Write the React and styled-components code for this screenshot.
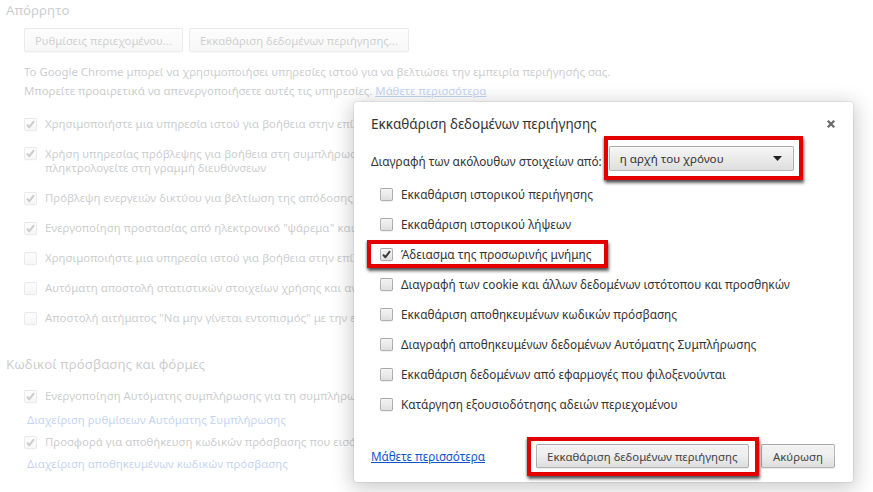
import React from "react";
import styled, { createGlobalStyle } from "styled-components";

const GlobalStyle = createGlobalStyle`
  html, body {
    margin: 0;
    padding: 0;
    background: #ffffff;
  }
  body {
    font-family: "Noto Sans", "Open Sans", sans-serif;
    font-size: 11.4px;
    color: #303942;
  }
`;

const Screen = styled.div`
  position: relative;
  width: 873px;
  height: 492px;
  overflow: hidden;
  background: #fff;
`;

/* ---------- settings page behind the dialog ---------- */

const Page = styled.div`
  padding: 0 0 0 6px;
`;

const SectionTitle = styled.h3`
  margin: ${(p) => p.top || 0}px 0 0 0;
  font-size: 13.3px;
  font-weight: normal;
  line-height: 20px;
  color: #303942;
  white-space: nowrap;
`;

const SectionBody = styled.div`
  padding-left: 18px;
  white-space: nowrap;
`;

const ButtonRow = styled.div`
  display: flex;
  gap: 6px;
  margin-top: 8px;
`;

const Button = styled.button`
  height: 24px;
  padding: 0 ${(p) => p.pad || 10}px;
  border: 1px solid rgba(0, 0, 0, 0.25);
  border-radius: 2px;
  background: linear-gradient(#f0f0f0, #f0f0f0 38%, #dedede);
  box-shadow: 0 1px 0 rgba(0, 0, 0, 0.08), inset 0 1px 2px rgba(255, 255, 255, 0.75);
  font-family: "Noto Sans", "Open Sans", sans-serif;
  font-size: ${(p) => p.size || 11.3}px;
  color: #444;
  white-space: nowrap;
  cursor: pointer;
`;

const Paragraph = styled.div`
  line-height: 19px;
  margin-top: ${(p) => p.top || 0}px;
`;

const Link = styled.a`
  color: #15c;
  text-decoration: ${(p) => (p.plain ? "none" : "underline")};
  cursor: pointer;
`;

/* rows run on under the dialog; clip them at its left edge */
const CheckList = styled.div`
  display: flex;
  flex-direction: column;
  width: 330px;
  overflow: hidden;
  margin-top: ${(p) => p.top || 0}px;
`;

const CheckRow = styled.label`
  display: flex;
  gap: 8px;
  padding: ${(p) => (p.multi ? "8px 0 8px" : "0")};
  min-height: ${(p) => (p.multi ? 0 : p.h || 30)}px;
  align-items: ${(p) => (p.multi ? "flex-start" : "center")};
  line-height: 14px;
`;

const SubLink = styled.div`
  padding-left: 3px;
  height: 24px;
  line-height: 24px;
`;

const BoxWrap = styled.span`
  flex: none;
  width: 13px;
  height: 13px;
  border: 1px solid rgba(0, 0, 0, 0.25);
  border-radius: 2px;
  box-sizing: border-box;
  background: linear-gradient(#ededed, #ededed 38%, #dedede);
  box-shadow: inset 0 1px 2px rgba(255, 255, 255, 0.75), 0 1px 0 rgba(0, 0, 0, 0.06);
  display: flex;
  align-items: center;
  justify-content: center;
`;

const Checkbox = ({ checked }) => (
  <BoxWrap>
    {checked && (
      <svg width="11" height="11" viewBox="0 0 11 11">
        <path d="M2 5.6 L4.4 8.2 L9 2.2" fill="none" stroke="#3b3b3b" strokeWidth="2" strokeLinejoin="round" />
      </svg>
    )}
  </BoxWrap>
);

/* ---------- modal overlay and dialog ---------- */

const Veil = styled.div`
  position: absolute;
  inset: 0;
  background: rgba(255, 255, 255, 0.74);
`;

const Dialog = styled.div`
  position: absolute;
  left: 354px;
  top: 102px;
  width: 499px;
  height: 380px;
  box-sizing: border-box;
  padding: 0 18px 0 17px;
  background: #fff;
  border-radius: 3px;
  box-shadow: 0 4px 20px 3px rgba(0, 0, 0, 0.2), 0 0 0 1px rgba(0, 0, 0, 0.06);
  display: flex;
  flex-direction: column;
  color: #333;
  font-size: 11.8px;
  white-space: nowrap;
`;

const DialogHeader = styled.div`
  height: 44px;
  display: flex;
  align-items: center;
  justify-content: space-between;
`;

const DialogTitle = styled.h2`
  margin: 0;
  font-size: 13.5px;
  font-weight: normal;
  color: #333;
`;

const CloseButton = styled.span`
  display: flex;
  margin-right: -1px;
  cursor: pointer;
`;

const SelectRow = styled.div`
  height: 30px;
  display: flex;
  align-items: center;
  gap: 7px;
`;

const Highlight = styled.div`
  display: inline-flex;
  align-self: flex-start;
  border: 4px solid #e30000;
  padding: ${(p) => p.pad};
  margin: ${(p) => p.mar};
  box-shadow: 1px 3px 3px rgba(0, 0, 0, 0.6), -1px 1px 2px rgba(0, 0, 0, 0.25);
  position: relative;
  z-index: 1;
  background: #fff;
`;

const Select = styled.div`
  width: 185px;
  height: 25px;
  box-sizing: border-box;
  border: 1px solid rgba(0, 0, 0, 0.25);
  border-radius: 2px;
  background: linear-gradient(#f5f5f5, #ededed 40%, #dedede);
  box-shadow: inset 0 1px 2px rgba(255, 255, 255, 0.75);
  display: flex;
  align-items: center;
  justify-content: space-between;
  padding: 0 11px 0 10px;
  font-size: 11.6px;
  color: #333;
`;

const DialogList = styled.div`
  display: flex;
  flex-direction: column;
  margin-top: 3px;
  padding-left: 9px;
`;

const DialogRow = styled.label`
  display: flex;
  align-items: center;
  gap: 8px;
  height: ${(p) => p.h || 30}px;
`;

const Footer = styled.div`
  margin-top: auto;
  padding-bottom: 14px;
  display: flex;
  align-items: center;
  justify-content: space-between;
`;

const FooterButtons = styled.div`
  display: flex;
  align-items: center;
  gap: 12px;
`;

const DialogLink = styled.a`
  color: #15c;
  text-decoration: underline;
  font-size: 11.7px;
  cursor: pointer;
`;

const items = [
  { text: "Εκκαθάριση ιστορικού περιήγησης", checked: false },
  { text: "Εκκαθάριση ιστορικού λήψεων", checked: false },
  { text: "Άδειασμα της προσωρινής μνήμης", checked: true, marked: true },
  { text: "Διαγραφή των cookie και άλλων δεδομένων ιστότοπου και προσθηκών", checked: false },
  { text: "Εκκαθάριση αποθηκευμένων κωδικών πρόσβασης", checked: false },
  { text: "Διαγραφή αποθηκευμένων δεδομένων Αυτόματης Συμπλήρωσης", checked: false },
  { text: "Εκκαθάριση δεδομένων από εφαρμογές που φιλοξενούνται", checked: false },
  { text: "Κατάργηση εξουσιοδότησης αδειών περιεχομένου", checked: false },
];

const App = () => {
  return (
    <Screen>
      <GlobalStyle />
      <Page>
        <SectionTitle>Απόρρητο</SectionTitle>
        <SectionBody>
          <ButtonRow>
            <Button>Ρυθμίσεις περιεχομένου...</Button>
            <Button>Εκκαθάριση δεδομένων περιήγησης...</Button>
          </ButtonRow>
          <Paragraph top={10}>
            Το Google Chrome μπορεί να χρησιμοποιήσει υπηρεσίες ιστού για να βελτιώσει την εμπειρία περιήγησής σας.
          </Paragraph>
          <Paragraph>
            Μπορείτε προαιρετικά να απενεργοποιήσετε αυτές τις υπηρεσίες. <Link>Μάθετε περισσότερα</Link>
          </Paragraph>
          <CheckList top={9}>
            <CheckRow>
              <Checkbox checked />
              <span>Χρησιμοποιήστε μια υπηρεσία ιστού για βοήθεια στην επίλυση σφαλμάτων πλοήγησης</span>
            </CheckRow>
            <CheckRow multi>
              <Checkbox checked />
              <span>
                Χρήση υπηρεσίας πρόβλεψης για βοήθεια στη συμπλήρωση αναζητήσεων και διευθύνσεων URL που
                <br />
                πληκτρολογείτε στη γραμμή διευθύνσεων
              </span>
            </CheckRow>
            <CheckRow>
              <Checkbox checked />
              <span>Πρόβλεψη ενεργειών δικτύου για βελτίωση της απόδοσης φόρτωσης σελίδων</span>
            </CheckRow>
            <CheckRow>
              <Checkbox checked />
              <span>Ενεργοποίηση προστασίας από ηλεκτρονικό "ψάρεμα" και κακόβουλο λογισμικό</span>
            </CheckRow>
            <CheckRow>
              <Checkbox />
              <span>Χρησιμοποιήστε μια υπηρεσία ιστού για βοήθεια στην επίλυση ορθογραφικών λαθών</span>
            </CheckRow>
            <CheckRow>
              <Checkbox />
              <span>Αυτόματη αποστολή στατιστικών στοιχείων χρήσης και αναφορών σφαλμάτων στην Google</span>
            </CheckRow>
            <CheckRow>
              <Checkbox />
              <span>Αποστολή αιτήματος "Να μην γίνεται εντοπισμός" με την επισκεψιμότητα περιήγησής σας</span>
            </CheckRow>
          </CheckList>
        </SectionBody>
        <SectionTitle top={21}>Κωδικοί πρόσβασης και φόρμες</SectionTitle>
        <SectionBody>
          <CheckList top={10}>
            <CheckRow h={24}>
              <Checkbox checked />
              <span>Ενεργοποίηση Αυτόματης συμπλήρωσης για τη συμπλήρωση φορμών ιστού με ένα κλικ</span>
            </CheckRow>
            <SubLink>
              <Link plain>Διαχείριση ρυθμίσεων Αυτόματης Συμπλήρωσης</Link>
            </SubLink>
            <CheckRow h={20}>
              <Checkbox checked />
              <span>Προσφορά για αποθήκευση κωδικών πρόσβασης που εισάγετε στον ιστό</span>
            </CheckRow>
            <SubLink>
              <Link plain>Διαχείριση αποθηκευμένων κωδικών πρόσβασης</Link>
            </SubLink>
          </CheckList>
        </SectionBody>
      </Page>

      <Veil />

      <Dialog>
        <DialogHeader>
          <DialogTitle>Εκκαθάριση δεδομένων περιήγησης</DialogTitle>
          <CloseButton>
            <svg width="10" height="10" viewBox="0 0 10 10">
              <path d="M1.8 1.8 L8.2 8.2 M8.2 1.8 L1.8 8.2" stroke="#6a6a6a" strokeWidth="2.3" />
            </svg>
          </CloseButton>
        </DialogHeader>
        <SelectRow>
          <span>Διαγραφή των ακόλουθων στοιχείων από:</span>
          <Highlight pad="6px 5px 5px 1px" mar="-10px -9px -9px -5px">
            <Select>
              <span>η αρχή του χρόνου</span>
              <svg width="9" height="5" viewBox="0 0 9 5">
                <path d="M0 0 L9 0 L4.5 5 Z" fill="#222" />
              </svg>
            </Select>
          </Highlight>
        </SelectRow>
        <DialogList>
          {items.map((item) =>
            item.marked ? (
              <Highlight key={item.text} pad="0 12px 0 9px" mar="1px 0 1px -13px">
                <DialogRow h={20}>
                  <Checkbox checked={item.checked} />
                  <span>{item.text}</span>
                </DialogRow>
              </Highlight>
            ) : (
              <DialogRow key={item.text}>
                <Checkbox checked={item.checked} />
                <span>{item.text}</span>
              </DialogRow>
            )
          )}
        </DialogList>
        <Footer>
          <DialogLink>Μάθετε περισσότερα</DialogLink>
          <FooterButtons>
            <Highlight pad="3px 6px 4px 5px" mar="-7px -10px -8px -9px">
              <Button pad={10.5} size={11.4}>Εκκαθάριση δεδομένων περιήγησης</Button>
            </Highlight>
            <Button pad={11} size={11.4}>Ακύρωση</Button>
          </FooterButtons>
        </Footer>
      </Dialog>
    </Screen>
  );
};

export default App;
